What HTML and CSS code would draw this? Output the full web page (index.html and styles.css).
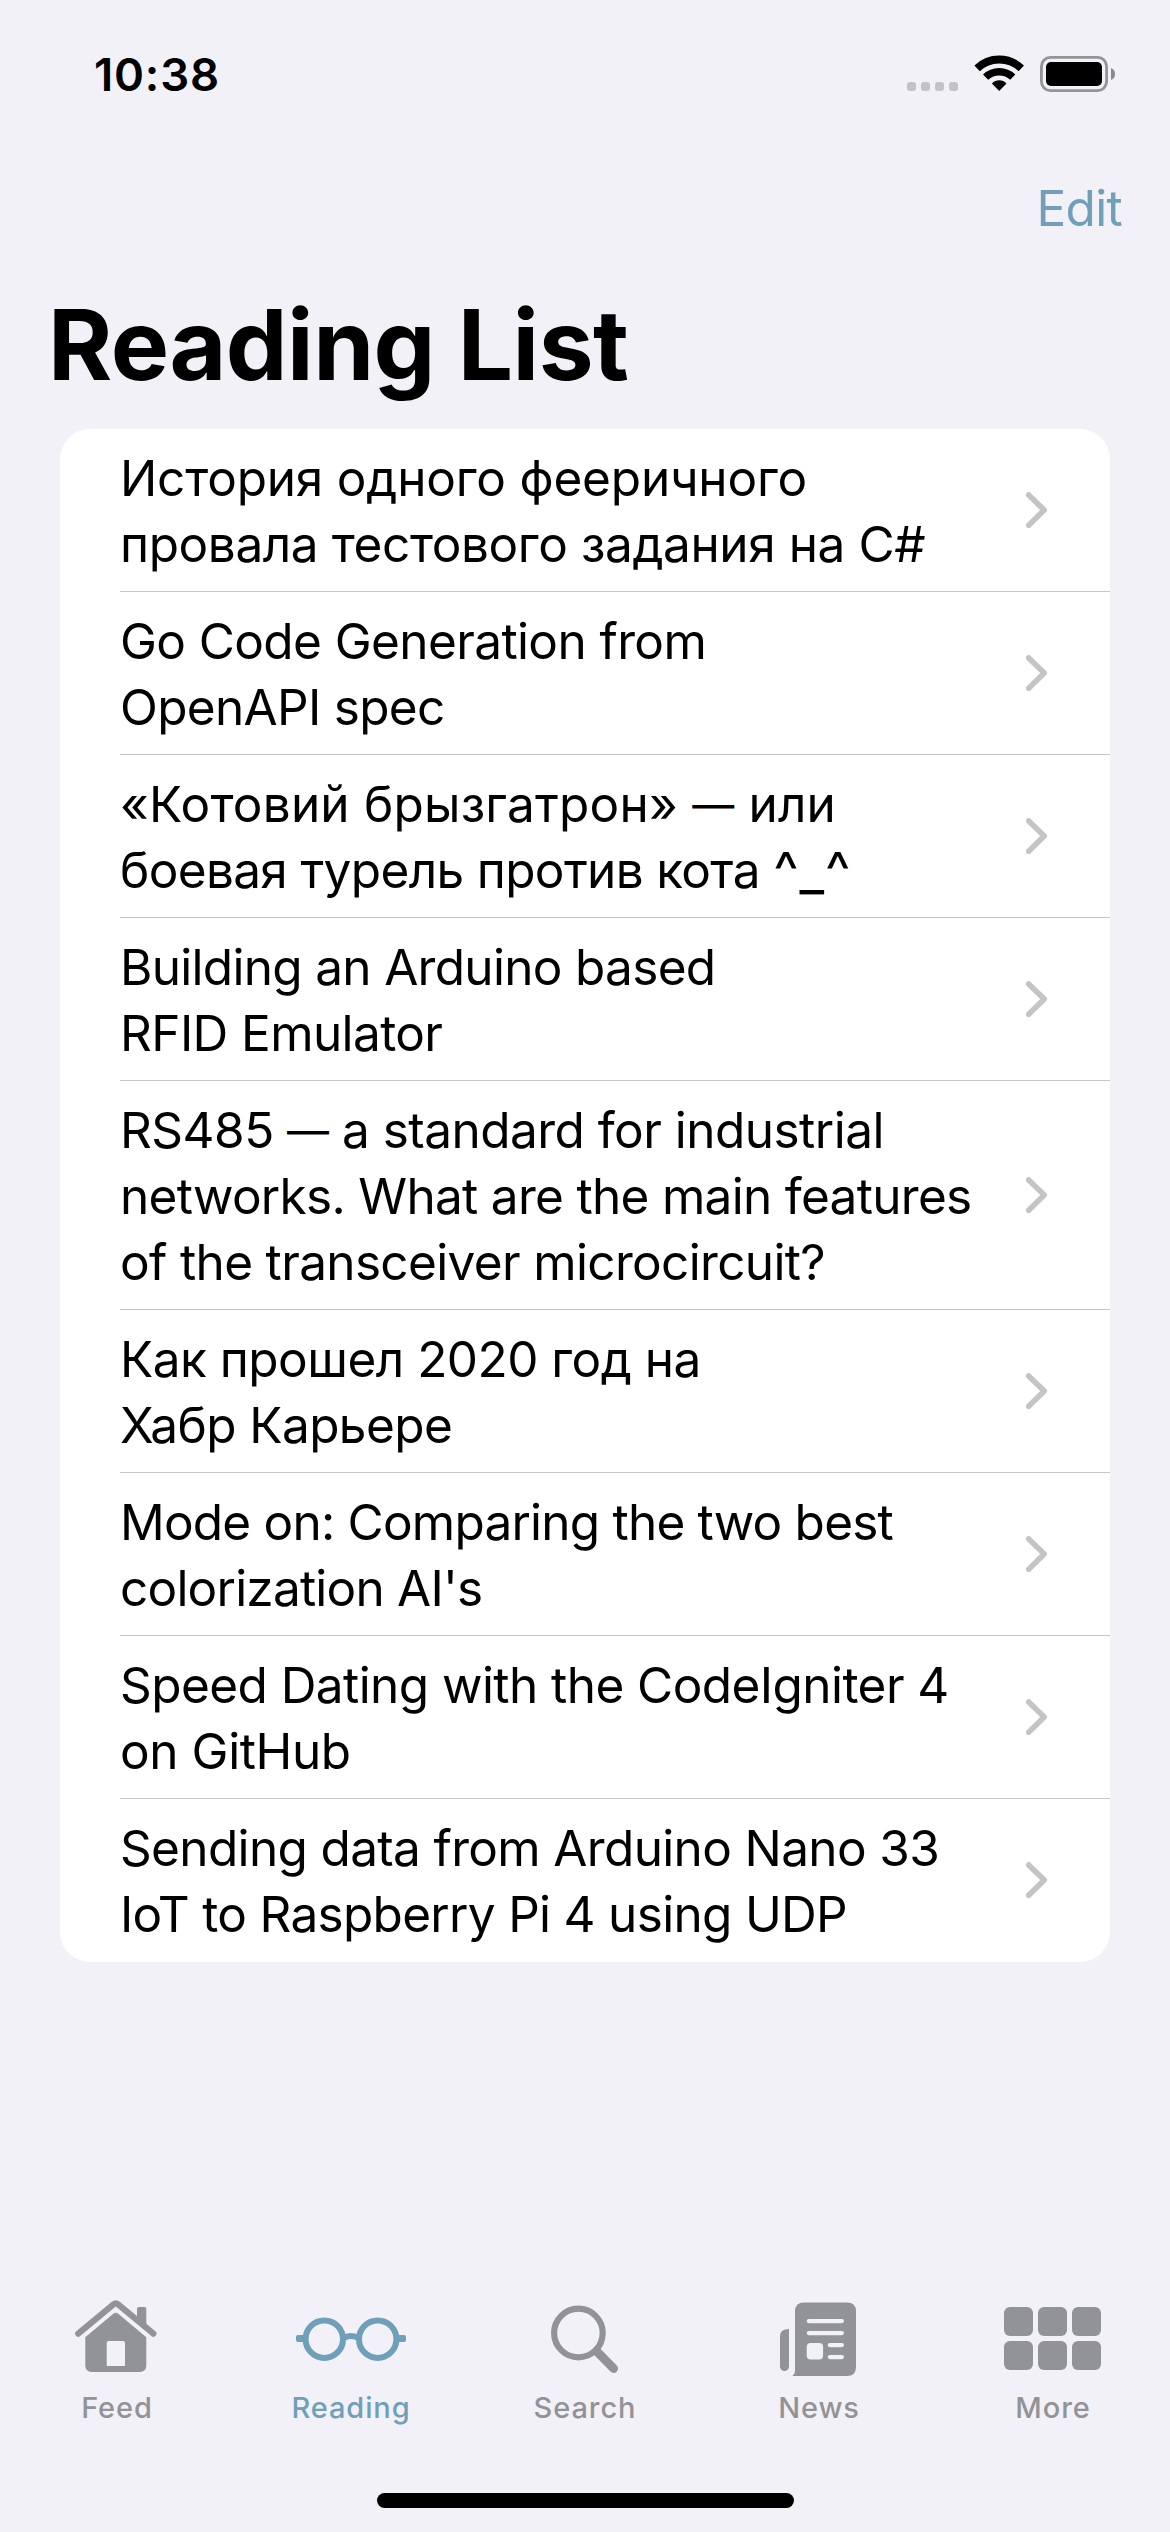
FILE: index.html
```html
<!DOCTYPE html>
<html lang="en">
<head>
<meta charset="utf-8">
<title>Reading List</title>
<link rel="stylesheet" href="styles.css">
</head>
<body>
<svg class="defs" width="0" height="0" aria-hidden="true">
  <symbol id="chevron" viewBox="1026 981 22 36">
    <path d="M1028.7 983.9 1044.2 999.1 1028.7 1014.3" fill="none" stroke="currentColor" stroke-width="5.6" stroke-linecap="round" stroke-linejoin="round"/>
  </symbol>
</svg>
<div class="screen">
  <header class="status">
    <span class="time">10:38</span>
    <div class="indicators">
      <svg class="signal" width="51" height="37" viewBox="907 55 51 37" fill="#c3c2c8">
        <rect x="907" y="82" width="9" height="9" rx="3"/><rect x="921" y="82" width="9" height="9" rx="3"/><rect x="935" y="82" width="9" height="9" rx="3"/><rect x="949" y="82" width="9" height="9" rx="3"/>
      </svg>
      <svg class="wifi" width="50" height="37" viewBox="974 55 50 37">
        <g fill="none" stroke="#000">
          <path d="M977.1 68.4A31.9 31.9 0 0 1 1021.3 68.4" stroke-width="7.8"/>
          <path d="M985.6 77.2A19.6 19.6 0 0 1 1012.8 77.2" stroke-width="7.4"/>
        </g>
        <path d="M999.2 91 991.9 83.5Q995 80.3 999.2 80.3T1006.5 83.5Z"/>
      </svg>
      <svg class="battery" width="76" height="37" viewBox="1040 55 76 37">
        <rect x="1041.4" y="57.4" width="65.2" height="33.2" rx="9" fill="none" stroke="#949397" stroke-width="2.8"/>
        <rect x="1046" y="62" width="56" height="24" rx="5"/>
        <path d="M1111 68Q1115 69.6 1115 74T1111 80Z" fill="#8a898d"/>
      </svg>
    </div>
  </header>
  <nav class="navbar"><a class="edit">Edit</a></nav>
  <h1 class="title">Reading List</h1>

  <ul class="list">
    <li class="row"><div class="text"><span class="t2">История одного фееричного</span><span class="t4">провала тестового задания на C#</span></div><svg class="chevron"><use href="#chevron"/></svg></li>
    <li class="row"><div class="text"><span class="t6">Go Code Generation from</span><span class="t7">OpenAPI spec</span></div><svg class="chevron"><use href="#chevron"/></svg></li>
    <li class="row"><div class="text"><span class="t0">«Котовий брызгатрон» <i class="dash">—</i> или</span><span class="t65">боевая турель против кота <i class="face">^_^</i></span></div><svg class="chevron"><use href="#chevron"/></svg></li>
    <li class="row"><div class="text"><span class="t7">Building an Arduino based</span><span class="t6">RFID Emulator</span></div><svg class="chevron"><use href="#chevron"/></svg></li>
    <li class="row"><div class="text"><span class="t5">RS485 <i class="dash">—</i> a standard for industrial</span><span class="t7">networks. What are the main features</span><span class="t65">of the transceiver microcircuit?</span></div><svg class="chevron"><use href="#chevron"/></svg></li>
    <li class="row"><div class="text"><span class="t5">Как прошел 2020 год на</span><span class="t6">Хабр Карьере</span></div><svg class="chevron"><use href="#chevron"/></svg></li>
    <li class="row"><div class="text"><span class="t8">Mode on: Comparing the two best</span><span class="t8">colorization AI's</span></div><svg class="chevron"><use href="#chevron"/></svg></li>
    <li class="row"><div class="text"><span class="t56">Speed Dating with the CodeIgniter 4</span><span class="t4">on GitHub</span></div><svg class="chevron"><use href="#chevron"/></svg></li>
    <li class="row"><div class="text"><span class="t65">Sending data from Arduino Nano 33</span><span class="t7">IoT to Raspberry Pi 4 using UDP</span></div><svg class="chevron"><use href="#chevron"/></svg></li>
  </ul>

  <footer class="tabs">
    <a class="tab">
      <svg viewBox="62 2295 110 85" fill="currentColor">
        <path d="M78.2 2333.6 113.5 2304.3Q115.8 2302.4 118.1 2304.3L153.4 2333.6" fill="none" stroke="currentColor" stroke-width="6.2" stroke-linecap="round"/>
        <path d="M137 2319V2309Q137 2307 139 2307H144.3Q146.3 2307 146.3 2309V2327Z"/>
        <path fill-rule="evenodd" d="M85.3 2337.2 113.6 2313.6Q115.8 2312 118 2313.6L146.3 2337.2V2365.5Q146.3 2372 139.8 2372H91.8Q85.3 2372 85.3 2365.5ZM106.7 2366H125V2343Q125 2341 123 2341H108.7Q106.7 2341 106.7 2343Z"/>
      </svg>
      <span>Feed</span>
    </a>
    <a class="tab active">
      <svg viewBox="296 2295 110 85" fill="none" stroke="currentColor" stroke-width="6">
        <circle cx="324.3" cy="2339.2" r="18.7"/><circle cx="377.7" cy="2339.2" r="18.7"/>
        <path d="M344.3 2337.8Q351 2334.4 357.7 2337.8"/>
        <path d="M304 2335H298Q296 2335 296 2337V2340Q296 2342 298 2342H304ZM398 2335H404Q406 2335 406 2337V2340Q406 2342 404 2342H398Z" fill="currentColor" stroke="none"/>
      </svg>
      <span>Reading</span>
    </a>
    <a class="tab">
      <svg viewBox="530 2295 110 85" fill="none" stroke="currentColor">
        <circle cx="578.4" cy="2333" r="24.3" stroke-width="6.2"/>
        <path d="M597 2351.6 613.6 2368.5" stroke-width="8.8" stroke-linecap="round"/>
      </svg>
      <span>Search</span>
    </a>
    <a class="tab">
      <svg viewBox="764 2295 110 85" fill="currentColor">
        <path d="M795 2311.3Q795 2302.4 804 2302.4H847Q856 2302.4 856 2311.3V2367Q856 2376 847 2376H792.3Q795 2374 795 2371Z"/>
        <path d="M789 2329V2366.5A4.5 4.5 0 0 1 780 2366.5V2336Q780 2329 789 2329Z"/>
        <g fill="#f2f1f7">
          <rect x="806.7" y="2319" width="37.3" height="4.2" rx="2.1"/>
          <rect x="806.7" y="2331" width="37.3" height="4.2" rx="2.1"/>
          <rect x="827.7" y="2343" width="16.3" height="4.2" rx="2.1"/>
          <rect x="827.7" y="2355" width="16.3" height="4.2" rx="2.1"/>
          <rect x="806.7" y="2343" width="16.4" height="16.6" rx="4"/>
        </g>
      </svg>
      <span>News</span>
    </a>
    <a class="tab">
      <svg viewBox="998 2295 110 85" fill="currentColor">
        <rect x="1004" y="2307" width="29" height="29" rx="6"/><rect x="1038" y="2307" width="29" height="29" rx="6"/><rect x="1072" y="2307" width="29" height="29" rx="6"/>
        <rect x="1004" y="2341" width="29" height="29" rx="6"/><rect x="1038" y="2341" width="29" height="29" rx="6"/><rect x="1072" y="2341" width="29" height="29" rx="6"/>
      </svg>
      <span>More</span>
    </a>
  </footer>
  <div class="home"></div>
</div>
</body>
</html>
```
FILE: styles.css
```css
* { box-sizing: border-box; }
body {
  margin: 0;
  background: #f2f1f7;
  color: #000;
  font-family: Inter, "Liberation Sans", sans-serif;
}
.defs { display: none; }
.screen {
  display: flex;
  flex-direction: column;
  width: 1170px;
  height: 2532px;
  padding-bottom: 24px;
}
.status {
  display: flex;
  justify-content: space-between;
  align-items: center;
  height: 141px;
  padding: 6px 54px 0 94px;
}
.time {
  padding-top: 2px;
  font-size: 45.5px;
  font-weight: 600;
  line-height: 54px;
  letter-spacing: .8px;
}
.indicators { display: flex; }
.signal { margin-right: 16px; }
.wifi { margin-right: 16px; }
.navbar {
  display: flex;
  justify-content: flex-end;
  align-items: center;
  height: 132px;
  padding: 1px 48px 0 0;
}
.edit {
  color: #6f9fb9;
  font-size: 49.5px;
  line-height: 60px;
  letter-spacing: -.7px;
}
.title {
  margin: 0 0 12px;
  padding-left: 48px;
  font-size: 98px;
  font-weight: 700;
  line-height: 144px;
  letter-spacing: -.52px;
}
.list {
  list-style: none;
  margin: 0 60px;
  padding: 0 0 0 60px;
  background: #fff;
  border-radius: 30px;
}
.row {
  display: flex;
  justify-content: space-between;
  align-items: center;
  padding: 16px 62px 14px 0;
  border-bottom: 1px solid #c6c6c8;
}
.row:last-child { border-bottom: 0; padding-bottom: 15px; }
.text {
  font-size: 49.5px;
  line-height: 66px;
  white-space: nowrap;
}
.text > span { display: block; }
.dash {
  font-size: 42px;
  font-style: normal;
  line-height: 0;
  vertical-align: 2px;
}
.face {
  font-size: 54px;
  font-style: normal;
  line-height: 0;
  letter-spacing: 4.5px;
  vertical-align: -2px;
}
.t0 { letter-spacing: .2px; }
.t2 { letter-spacing: -.2px; }
.t4 { letter-spacing: -.41px; }
.t5 { letter-spacing: -.52px; }
.t56 { letter-spacing: -.56px; }
.t6 { letter-spacing: -.6px; }
.t65 { letter-spacing: -.65px; }
.t7 { letter-spacing: -.69px; }
.t8 { letter-spacing: -.78px; }
.chevron {
  width: 22px;
  height: 36px;
  margin-bottom: 2px;
  color: #c4c4c7;
}
.tabs {
  display: grid;
  grid-template-columns: repeat(5, 1fr);
  margin-top: auto;
  margin-bottom: 67px;
}
.tab {
  display: flex;
  flex-direction: column;
  align-items: center;
  gap: 10px;
  color: #929397;
  font-size: 29px;
  font-weight: 500;
  line-height: 36px;
  letter-spacing: .9px;
}
.tab svg { width: 110px; height: 85px; }
.active { color: #6f9fb9; }
.home {
  width: 417px;
  height: 15px;
  margin-left: 377px;
  border-radius: 8px;
  background: #000;
}
```
